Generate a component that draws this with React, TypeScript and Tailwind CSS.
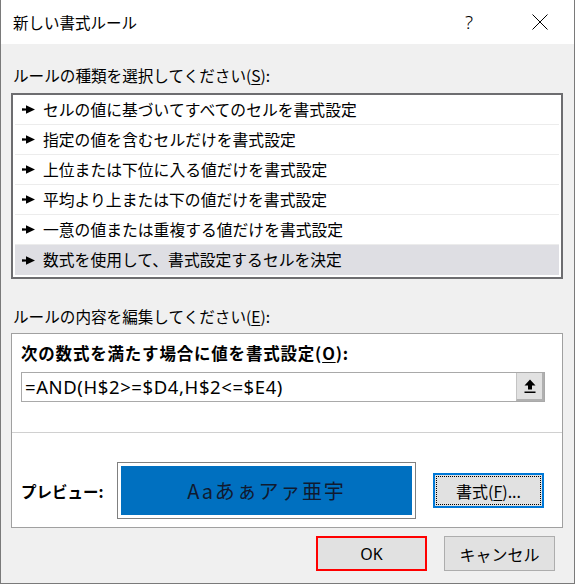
import React from "react";

const JP = { fontFamily: '"Noto Sans CJK JP", "Noto Sans", sans-serif' };

function Arrow() {
  return (
    <svg width="13" height="9" viewBox="0 0 13 9" className="shrink-0">
      <path d="M0 3.3 L4 3.4 L4 0.2 L13 4.5 L4 8.8 L4 5.6 L0 5.7 Z" fill="#000" />
    </svg>
  );
}

const items = [
  "セルの値に基づいてすべてのセルを書式設定",
  "指定の値を含むセルだけを書式設定",
  "上位または下位に入る値だけを書式設定",
  "平均より上または下の値だけを書式設定",
  "一意の値または重複する値だけを書式設定",
  "数式を使用して、書式設定するセルを決定",
];

export default function App() {
  return (
    <div
      className="w-[575px] h-[584px] bg-[#f0f0f0] border-x border-b border-[#7a7a7a] flex flex-col text-black"
      style={JP}
    >
      {/* title bar */}
      <div className="h-[44px] bg-white flex items-center pl-[12px] shrink-0">
        <span className="text-[15.5px] leading-[20px]">新しい書式ルール</span>
        <div className="ml-auto mr-[11px] flex items-center gap-[25px]">
          <div className="w-[46px] flex justify-center">
            <span className="text-[19px] leading-[20px] font-light" style={{ fontFamily: '"Noto Sans", sans-serif' }}>?</span>
          </div>
          <div className="w-[46px] flex justify-center">
            <svg width="16" height="16" viewBox="0 0 16 16">
              <path d="M0.5 0.5 L15.5 15.5 M15.5 0.5 L0.5 15.5" stroke="#000" strokeWidth="1" />
            </svg>
          </div>
        </div>
      </div>

      <div className="px-[10px] flex flex-col">
        <div className="mt-[21px] h-[20px] pl-[2px] text-[15.6px] leading-[20px]">
          ルールの種類を選択してください(<span className="underline underline-offset-2">S</span>):
        </div>

        {/* rule type list */}
        <div className="mt-[8px] w-[552px] h-[186px] border-2 border-[#6d6d70] bg-white px-[2px] pb-[2px] flex flex-col">
          {items.map((t, i) => (
            <div
              key={i}
              className={
                i === 5
                  ? "h-[30px] flex items-center pl-[7px] gap-[8px] bg-[#dedee3]"
                  : "h-[30px] flex items-center pl-[7px] gap-[8px] border-b border-[#ececec]"
              }
            >
              <Arrow />
              <span className="text-[15.8px] leading-[20px]">{t}</span>
            </div>
          ))}
        </div>

        <div className="mt-[27px] h-[20px] pl-[2px] text-[15.6px] leading-[20px]">
          ルールの内容を編集してください(<span className="underline underline-offset-2">E</span>):
        </div>

        {/* edit panel */}
        <div className="mt-[7px] w-[552px] h-[195px] border border-[#a0a0a0] bg-white flex flex-col">
          <div className="mt-[9px] pl-[9px] h-[20px] text-[16.5px] leading-[20px] font-bold tracking-[0.8px]">
            次の数式を満たす場合に値を書式設定(<span className="underline underline-offset-2">O</span>):
          </div>
          <div className="mt-[9px] ml-[9px] w-[524px] h-[30px] border border-[#a9a9a9] flex">
            <div
              className="flex-1 flex items-center pl-[3px] text-[18.5px] leading-[22px] tracking-[0.6px]"
              style={{ fontFamily: '"Noto Sans", sans-serif' }}
            >
              =AND(H$2&gt;=$D4,H$2&lt;=$E4)
            </div>
            <div className="w-[28px] h-full bg-[#e1e1e1] border-l border-[#c4c4c4] border-r-2 border-b-2 border-r-[#b0b0b0] border-b-[#b0b0b0] flex items-center justify-center">
              <svg width="12" height="15" viewBox="0 0 12 15">
                <path d="M6 0.5 L11.5 6.5 L8 6.5 L8 10.5 L4 10.5 L4 6.5 L0.5 6.5 Z" fill="#000" />
                <rect x="0.5" y="12.5" width="11" height="1.5" fill="#000" />
              </svg>
            </div>
          </div>
          <div className="mt-[30px] border-t border-[#d0d0d0]" />
          <div className="mt-[29px] flex items-center">
            <div className="pl-[9px] w-[105px] text-[15.5px] leading-[20px] font-bold">プレビュー:</div>
            <div className="w-[299px] h-[57px] border border-[#808080] p-[3px]">
              <div className="w-full h-full bg-[#0070c0] flex items-center justify-center">
                <span className="text-[20px] leading-[24px] text-[#101a30] tracking-[1.8px]">Aaあぁアァ亜宇</span>
              </div>
            </div>
            <div className="ml-[17px] w-[111px] h-[35px] border-2 border-[#0078d7] bg-[#e1e1e1] p-[1px]">
              <div className="w-full h-full border border-dotted border-[#000] flex items-center justify-center text-[16px] leading-[20px]">
                書式(<span className="underline underline-offset-2">F</span>)...
              </div>
            </div>
          </div>
        </div>

        {/* bottom buttons */}
        <div className="mt-[8px] flex justify-end gap-[17px] pr-[9px]">
          <div className="w-[111px] h-[35px] border-2 border-[#ff0000] bg-[#e1e1e1] flex items-center justify-center text-[16px] leading-[20px]" style={{ fontFamily: '"Noto Sans", "Noto Sans CJK JP", sans-serif' }}>
            OK
          </div>
          <div className="w-[111px] h-[35px] border border-[#adadad] bg-[#e1e1e1] flex items-center justify-center text-[16px] leading-[20px]">
            キャンセル
          </div>
        </div>
      </div>
    </div>
  );
}
